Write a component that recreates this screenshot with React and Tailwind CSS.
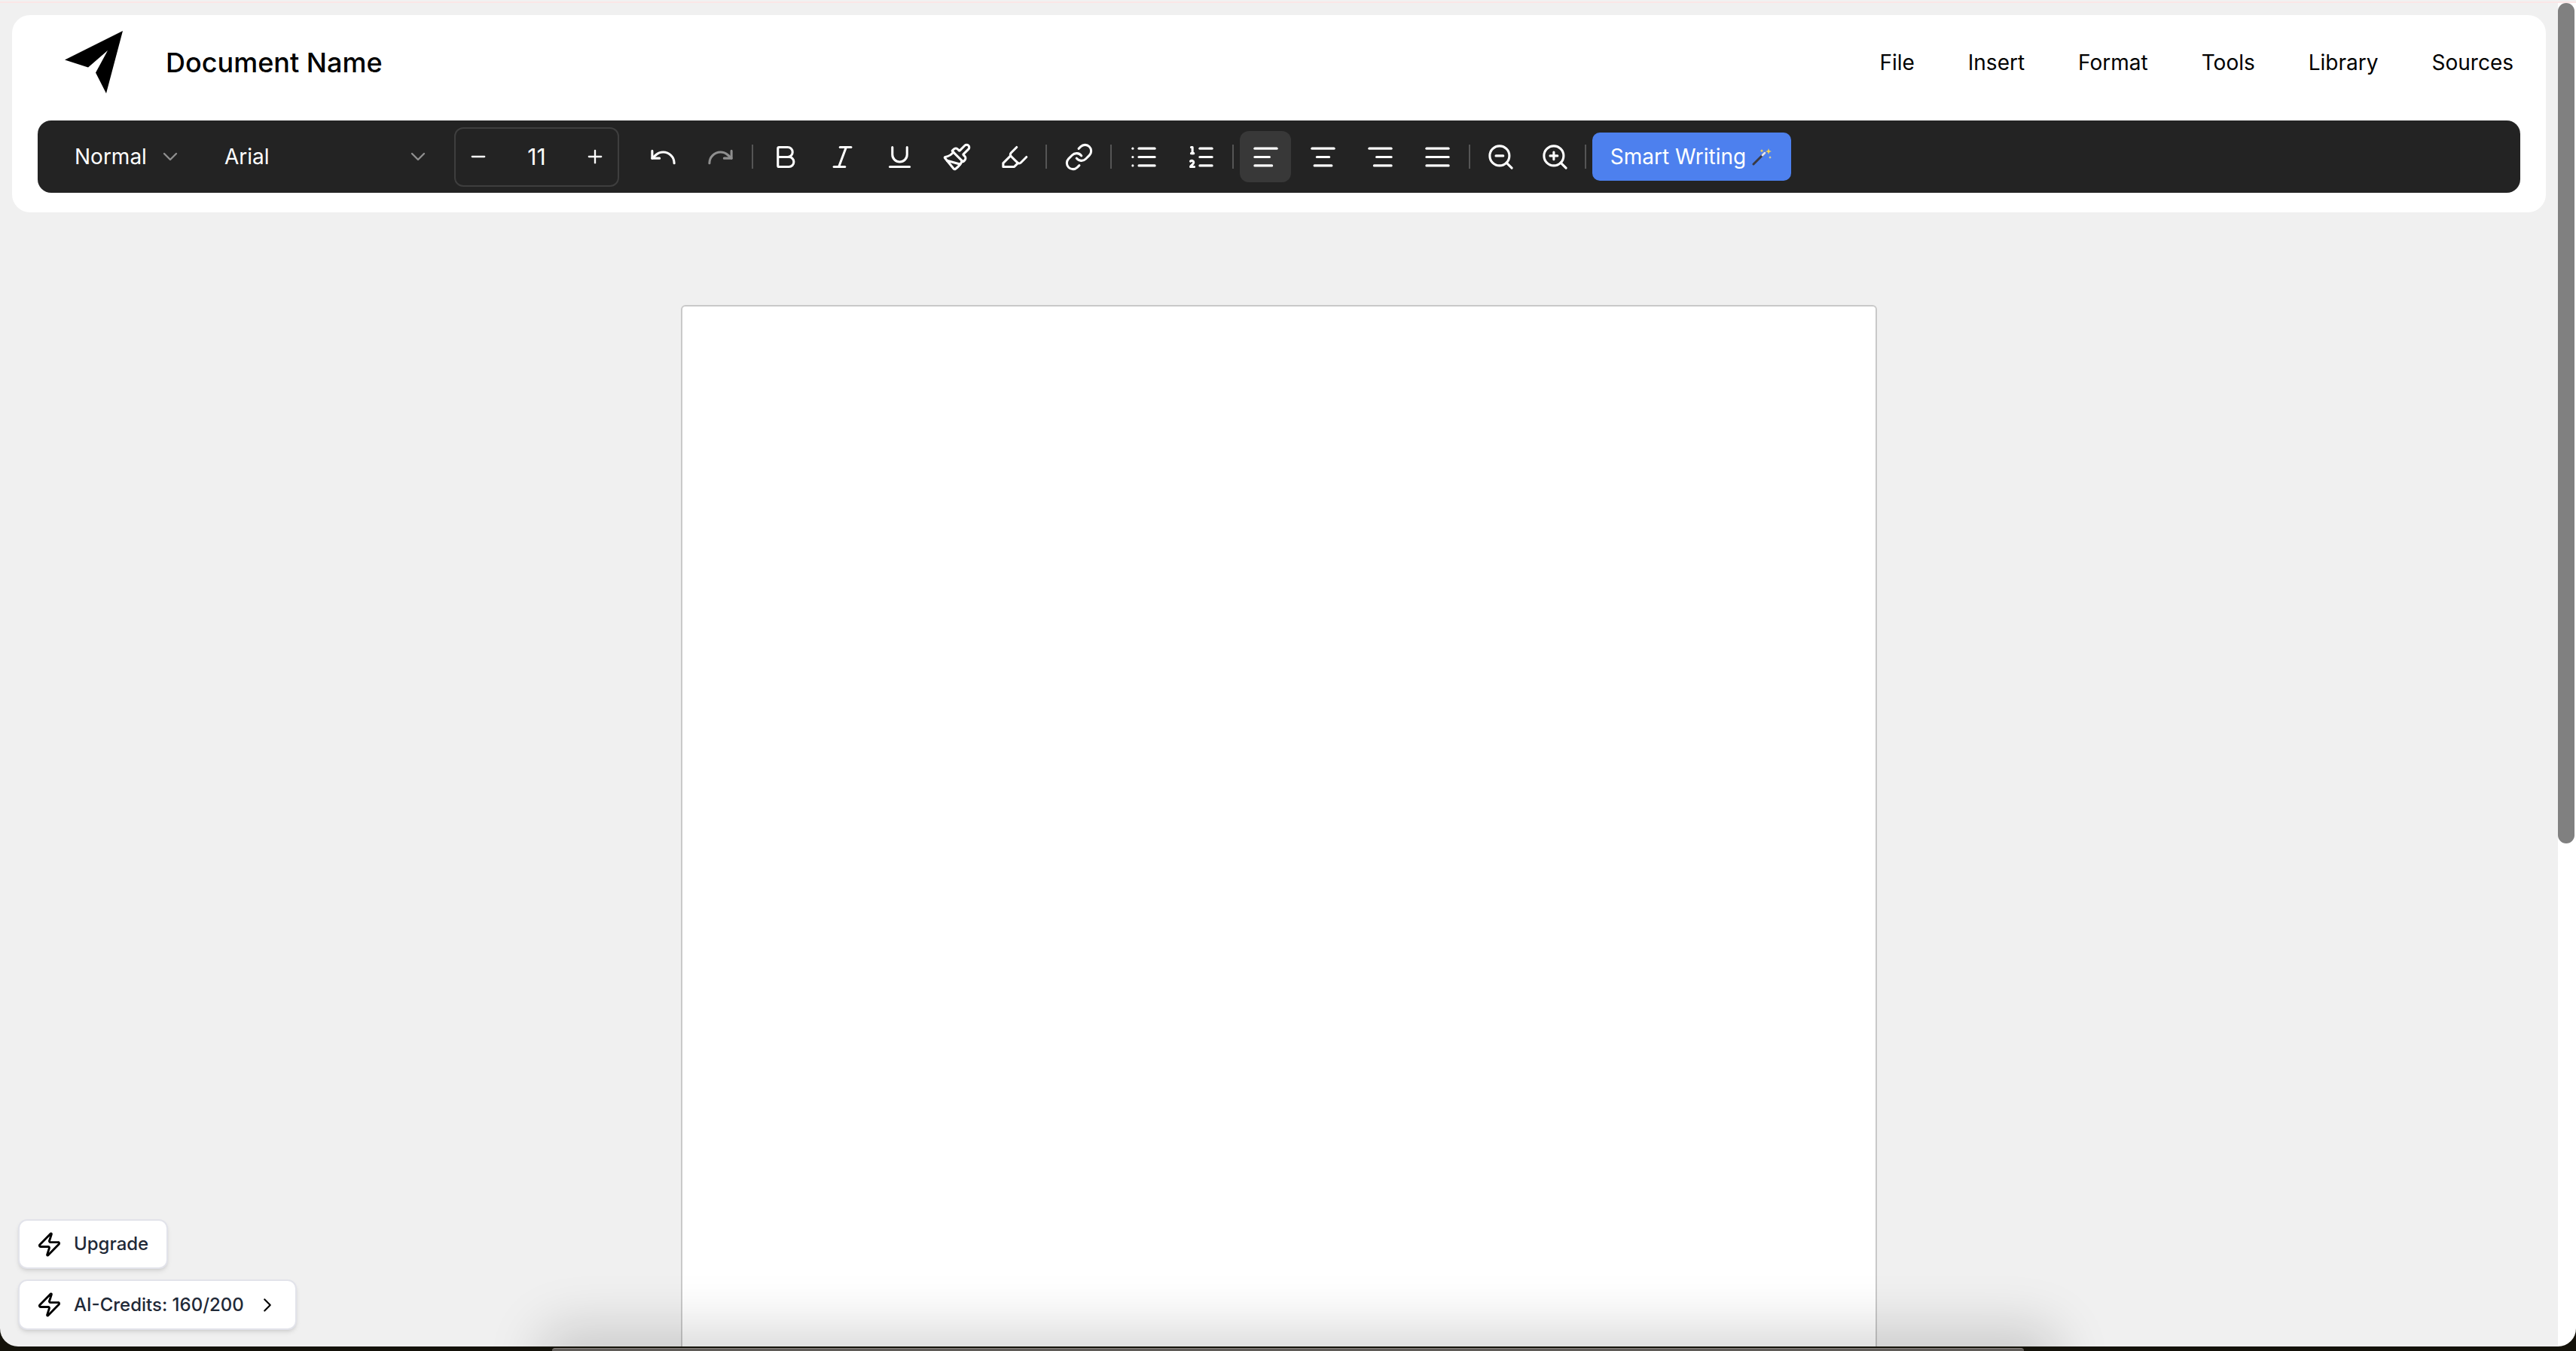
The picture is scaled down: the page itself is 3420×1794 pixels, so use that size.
import React from "react";
import {
  AlignCenter,
  AlignJustify,
  AlignLeft,
  AlignRight,
  Bold,
  ChevronDown,
  ChevronRight,
  Highlighter,
  Italic,
  Link,
  List,
  ListOrdered,
  Minus,
  Paintbrush,
  Plus,
  Redo,
  Underline,
  Undo,
  Zap,
  ZoomIn,
  ZoomOut,
} from "lucide-react";

const navItems = ["File", "Insert", "Format", "Tools", "Library", "Sources"];

const Logo = () => (
  <svg width="78" height="84" viewBox="0 0 78 84" className="shrink-0">
    <polygon points="77,0 0,38.5 31,48.5 57,26 41,55.5 55,83" fill="#000" />
  </svg>
);

const Wand = () => (
  <svg width="28" height="24" viewBox="0 0 28 24" className="ml-2 shrink-0">
    <path d="M2 22 L17 7" stroke="#3a3a44" strokeWidth="3" strokeLinecap="round" />
    <path d="M14 10 L17 7" stroke="#e4e4ee" strokeWidth="3" strokeLinecap="round" />
    <path d="M22 1l1 3 3 1-3 1-1 3-1-3-3-1 3-1z" fill="#ffd84d" />
    <path d="M13 2l.7 1.6 1.6.7-1.6.7-.7 1.6-.7-1.6-1.6-.7 1.6-.7z" fill="#ffd84d" />
    <path d="M24 11l.6 1.4 1.4.6-1.4.6-.6 1.4-.6-1.4-1.4-.6 1.4-.6z" fill="#ffe98a" />
  </svg>
);

const Sep = () => <div className="mx-1 h-8 w-[2px] shrink-0 bg-[#555555]" />;

const ToolBtn = ({ icon: Icon, active, muted, wide }) => (
  <button className={`flex h-[68px] shrink-0 items-center justify-center ${wide ? "w-[76px]" : "w-[72px]"}`}>
    <span
      className={`flex h-[68px] w-[68px] items-center justify-center rounded-xl ${
        active ? "bg-[#383838]" : ""
      }`}
    >
      <Icon size={39} strokeWidth={1.9} className={muted ? "text-[#8f8f8f]" : "text-white"} />
    </span>
  </button>
);

const Toolbar = () => (
  <div className="mx-[34px] mt-[14px] flex h-24 items-center rounded-[18px] bg-[#232323] pl-[49px] font-['Inter',sans-serif] text-[28px] text-white">
    <div className="flex w-[199px] shrink-0 items-center">
      <span>Normal</span>
      <ChevronDown size={32} strokeWidth={1.8} className="ml-[15px] text-[#8f8f8f]" />
    </div>
    <div className="flex w-[305px] shrink-0 items-center">
      <span>Arial</span>
      <ChevronDown size={32} strokeWidth={1.8} className="ml-[181px] text-[#8f8f8f]" />
    </div>
    <div className="flex h-[79px] w-[219px] shrink-0 items-center justify-between rounded-xl border-2 border-[#3e3e3e] px-4">
      <Minus size={28} strokeWidth={2} />
      <span className="text-[30px]">11</span>
      <Plus size={28} strokeWidth={2} />
    </div>
    <div className="ml-[20px] flex items-center">
      <ToolBtn icon={Undo} wide />
      <ToolBtn icon={Redo} muted wide />
      <Sep />
      <ToolBtn icon={Bold} wide />
      <ToolBtn icon={Italic} wide />
      <ToolBtn icon={Underline} wide />
      <ToolBtn icon={Paintbrush} wide />
      <ToolBtn icon={Highlighter} wide />
      <Sep />
      <ToolBtn icon={Link} wide />
      <Sep />
      <ToolBtn icon={List} wide />
      <ToolBtn icon={ListOrdered} wide />
      <Sep />
      <ToolBtn icon={AlignLeft} active wide />
      <ToolBtn icon={AlignCenter} wide />
      <ToolBtn icon={AlignRight} wide />
      <ToolBtn icon={AlignJustify} wide />
      <Sep />
      <ToolBtn icon={ZoomOut} />
      <ToolBtn icon={ZoomIn} />
      <Sep />
      <button className="ml-1 flex h-16 w-[264px] shrink-0 items-center justify-center rounded-[10px] bg-[#4d80ee] text-[28px]">
        Smart Writing
        <Wand />
      </button>
    </div>
  </div>
);

const Header = () => (
  <div className="h-[262px] rounded-3xl bg-white">
    <div className="flex h-[126px] items-center justify-between pr-[43px] pl-[70px]">
      <div className="flex items-center">
        <Logo />
        <h1 className="ml-[56px] text-[36px] font-medium text-black">Document Name</h1>
      </div>
      <div className="flex items-center gap-[71px] text-[28px] text-black">
        {navItems.map((item) => (
          <span key={item}>{item}</span>
        ))}
      </div>
    </div>
    <Toolbar />
  </div>
);

const App = () => {
  return (
    <div className="flex h-[1794px] w-[3420px] flex-col overflow-hidden bg-[#14120a] font-['Inter',sans-serif]">
      <div className="h-1 shrink-0 border-b-2 border-[#fbe6e6] bg-[#f1f1f1]" />
      <div className="flex h-[1784px] shrink-0 overflow-hidden rounded-b-3xl">
        <main className="relative flex w-[3396px] shrink-0 flex-col overflow-hidden bg-[#f0f0f0] px-4 pt-4">
          <Header />
          <div className="mx-auto mt-[123px] w-[1588px] flex-1 rounded-t-md border-2 border-b-0 border-[#c9c9c9] bg-white" />

          <div className="absolute bottom-[-36px] left-[760px] h-[20px] w-[1930px] rounded-full shadow-[0_0_70px_44px_rgba(0,0,0,0.15)]" />

          <div className="absolute bottom-[22px] left-[24px] flex flex-col items-start gap-[14px] text-[24px] font-medium text-[#1f2937]">
            <button className="flex h-[66px] w-[199px] items-center rounded-xl border-2 border-[#e2e3ea] bg-white pl-[22px] shadow-md">
              <Zap size={35} strokeWidth={2} className="text-black" />
              <span className="ml-[15px]">Upgrade</span>
            </button>
            <button className="flex h-[67px] w-[370px] items-center rounded-xl border-2 border-[#e2e3ea] bg-white pl-[22px] shadow-md">
              <Zap size={35} strokeWidth={2} className="text-black" />
              <span className="ml-[15px]">AI-Credits: 160/200</span>
              <ChevronRight size={30} strokeWidth={1.7} className="ml-[16px] text-black" />
            </button>
          </div>
        </main>
        <div className="flex-1 bg-white">
          <div className="h-[1116px] w-[22px] rounded-full bg-[#808080]" />
        </div>
      </div>
      <div className="flex-1 px-[733px] pt-[2px]">
        <div className="h-full rounded-t-lg border-t border-[#8a8580] bg-[#5f5b57]" />
      </div>
    </div>
  );
};

export default App;
